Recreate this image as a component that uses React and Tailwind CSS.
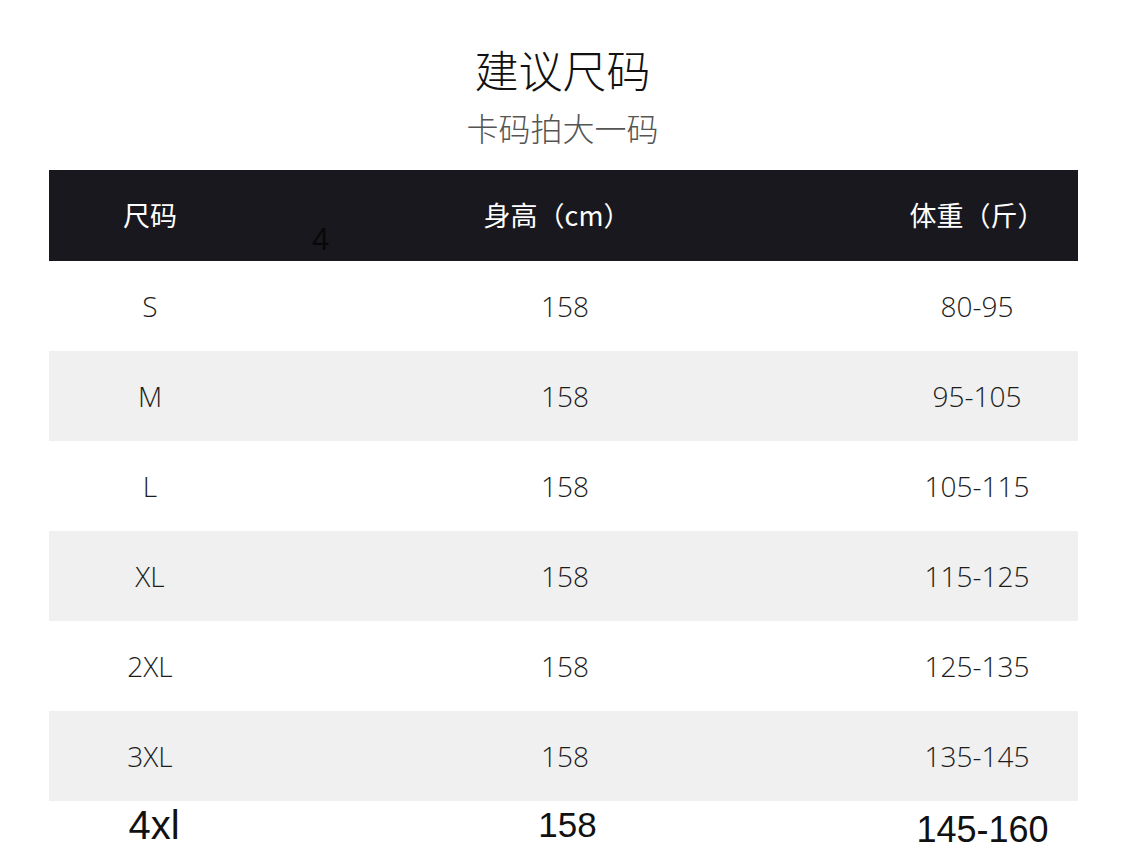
export default function App() {
  const rows = [
    ["S", "158", "80-95"],
    ["M", "158", "95-105"],
    ["L", "158", "105-115"],
    ["XL", "158", "115-125"],
    ["2XL", "158", "125-135"],
    ["3XL", "158", "135-145"],
  ];
  const cjk = { fontFamily: '"Noto Sans CJK SC", "Noto Sans", sans-serif' };
  const latin = { fontFamily: '"Open Sans", "Noto Sans", "Noto Sans CJK SC", sans-serif' };
  const arial = { fontFamily: '"Liberation Sans", Arial, sans-serif' };
  return (
    <div className="w-[1125px] h-[847px] bg-white overflow-hidden relative" style={cjk}>
      <div className="flex flex-col items-center pt-[41px]">
        <div className="text-[44px] leading-[56px] text-[#111] font-light">建议尺码</div>
        <div className="text-[32px] leading-[40px] text-[#555] mt-[10px] font-light">卡码拍大一码</div>
      </div>
      <div className="ml-[49px] w-[1029px] mt-[23px]">
        <div className="grid grid-cols-[202px_1fr_202px] h-[91px] bg-[#18181e] text-white text-[27px] items-center relative">
          <div className="text-center">尺码</div>
          <div className="text-center pr-[13px]">身高（cm）</div>
          <div className="text-center">体重（斤）</div>
          <div className="absolute left-[263px] top-[54px] text-[31px] leading-none text-[#08080a]" style={arial}>4</div>
        </div>
        {rows.map((r, i) => (
          <div
            key={r[0]}
            className={`grid grid-cols-[202px_1fr_202px] h-[90px] items-center text-[28px] text-[#1c1c1c] font-light ${i % 2 === 1 ? "bg-[#f0f0f0]" : "bg-white"}`}
            style={latin}
          >
            <div className="text-center">{r[0]}</div>
            <div className="text-center pl-[3px]">{r[1]}</div>
            <div className="text-center">{r[2]}</div>
          </div>
        ))}
        <div className="grid grid-cols-[202px_1fr_202px] h-[46px] text-[#111]" style={arial}>
          <div className="text-center text-[40px] leading-none pt-[4px] pl-[8px]">4xl</div>
          <div className="text-center text-[35px] leading-none pt-[6px] pl-[8px]">158</div>
          <div className="text-center text-[36px] leading-[34px] pt-[12px] pl-[11px]">145-160</div>
        </div>
      </div>
    </div>
  );
}
